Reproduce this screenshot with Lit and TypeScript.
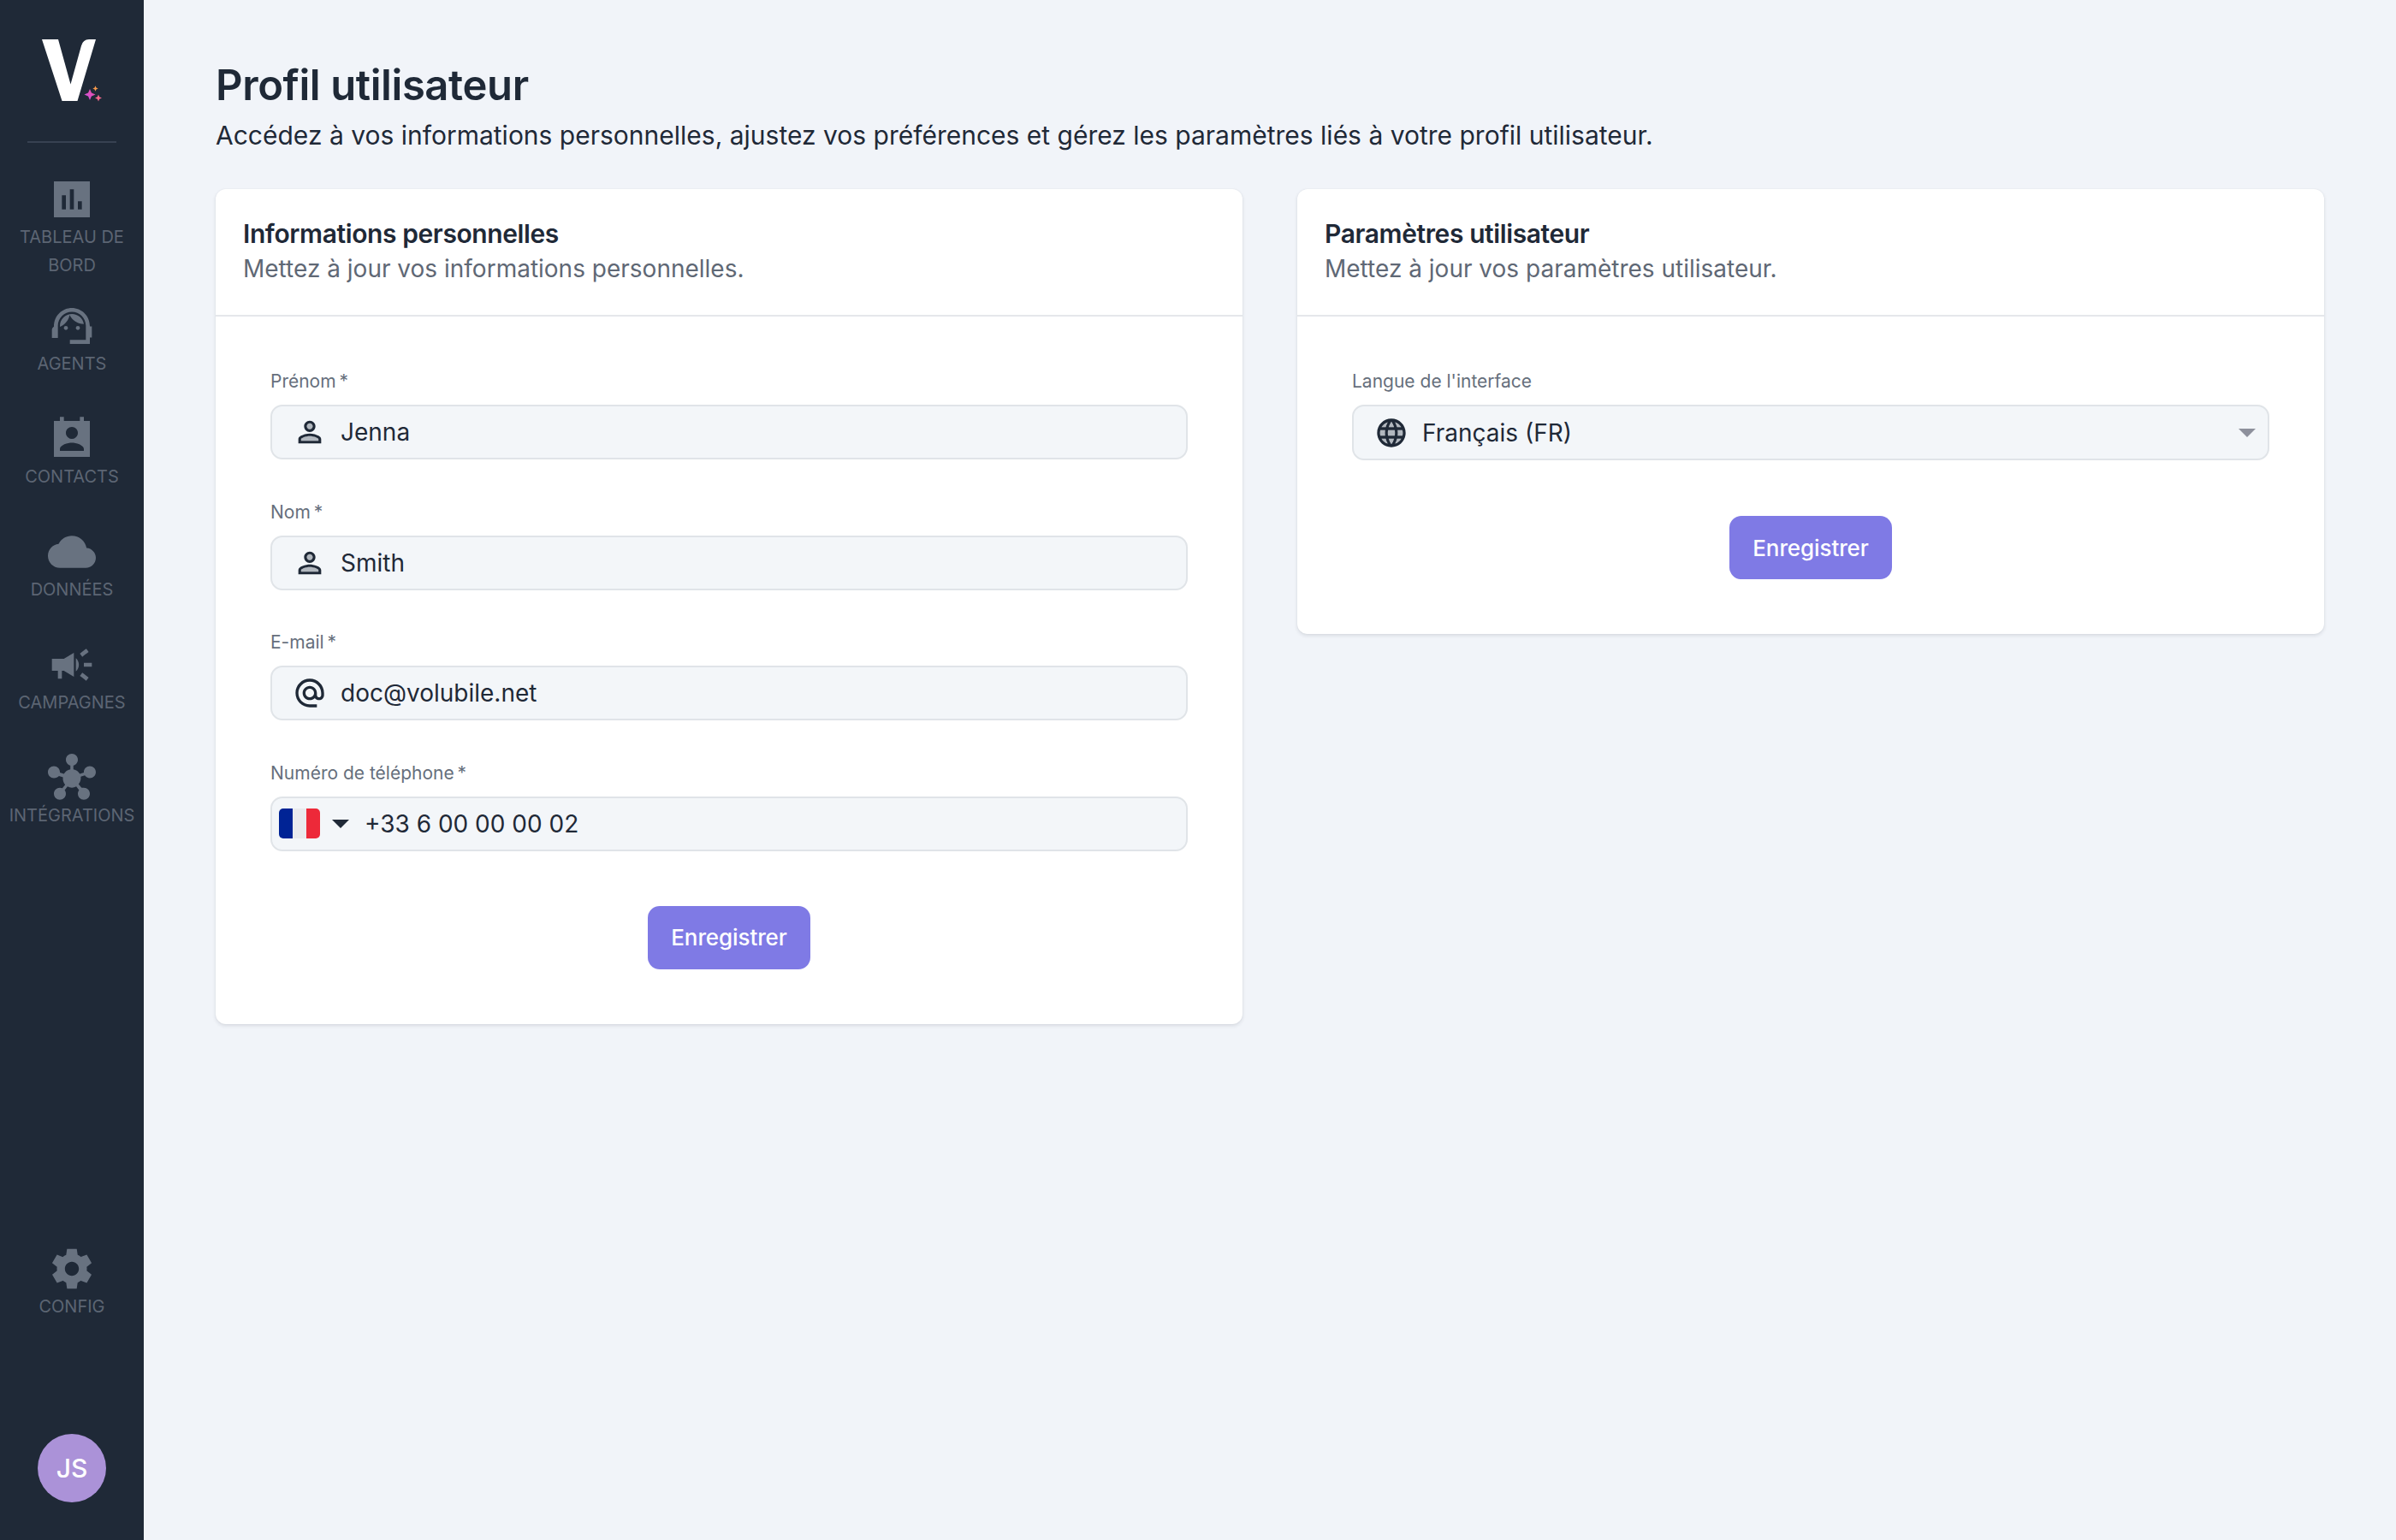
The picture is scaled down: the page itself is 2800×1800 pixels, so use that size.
import { LitElement, html, css, svg } from "lit";
import { customElement } from "lit/decorators.js";

const P = {
  bar: svg`<path d="M3 3v18h18V3H3zm6 14H7v-7h2v7zm4 0h-2V7h2v10zm4 0h-2v-4h2v4z"/>`,
  agent: svg`<path d="M21 12.22C21 6.73 16.74 3 12 3c-4.69 0-9 3.65-9 9.28-.6.34-1 .98-1 1.72V18h3v-6.1c0-3.87 3.13-7 7-7s7 3.13 7 7V19h-8v2h10v-3.22h1v-5.56h-1z"/><circle cx="9" cy="13" r="1"/><circle cx="15" cy="13" r="1"/><path d="M18 11.03C17.52 8.18 15.04 6 12.05 6c-3.03 0-6.29 2.51-6.03 6.45 2.47-1.01 4.33-3.21 4.86-5.89 1.31 2.63 4 4.44 7.12 4.47z"/>`,
  contact: svg`<path fill-rule="evenodd" d="M21 3h-3V1h-2v2H8V1H6v2H3v18h18V3zm-9 3c1.66 0 3 1.34 3 3s-1.34 3-3 3-3-1.34-3-3 1.34-3 3-3zm6 12H6v-1c0-2 4-3.1 6-3.1s6 1.1 6 3.1v1z"/>`,
  cloud: svg`<path d="M19.35 10.04C18.67 6.59 15.64 4 12 4 9.11 4 6.6 5.64 5.35 8.04 2.34 8.36 0 10.91 0 14c0 3.31 2.69 6 6 6h13c2.76 0 5-2.24 5-5 0-2.64-2.05-4.78-4.65-4.96z"/>`,
  campaign: svg`<path d="M18 11v2h4v-2h-4zm-2 6.61c.96.71 2.21 1.65 3.2 2.39.4-.53.8-1.07 1.2-1.6-.99-.74-2.24-1.68-3.2-2.4-.4.54-.8 1.08-1.2 1.61zM20.4 5.6c-.4-.53-.8-1.07-1.2-1.6-.99.74-2.24 1.68-3.2 2.4.4.53.8 1.07 1.2 1.6.96-.72 2.21-1.65 3.2-2.4zM2 9v6h3v4h2v-4h1l5 3V6L8 9H2zm13.5 3c0-1.33-.58-2.53-1.5-3.35v6.69c.92-.81 1.5-2.01 1.5-3.34z"/>`,
  hub: svg`<path d="M8.4 18.2c.38.5.6 1.12.6 1.8 0 1.66-1.34 3-3 3s-3-1.34-3-3 1.34-3 3-3c.44 0 .85.09 1.23.26l1.41-1.77c-.92-1.03-1.29-2.39-1.09-3.69l-2.03-.68C4.98 11.65 4.06 12.2 3 12.2c-1.66 0-3-1.34-3-3s1.34-3 3-3 3 1.34 3 3c0 .07 0 .14-.01.21l2.03.68c.64-1.21 1.82-2.09 3.22-2.32V5.91C9.96 5.57 9 4.4 9 3c0-1.66 1.34-3 3-3s3 1.34 3 3c0 1.4-.96 2.57-2.25 2.91v1.86c1.4.23 2.58 1.11 3.22 2.32l2.03-.68c-.01-.07-.01-.14-.01-.21 0-1.66 1.34-3 3-3s3 1.34 3 3-1.34 3-3 3c-1.06 0-1.98-.55-2.52-1.38l-2.03.68c.2 1.29-.16 2.65-1.09 3.69l1.41 1.77C17.15 17.09 17.56 17 18 17c1.66 0 3 1.34 3 3s-1.34 3-3 3-3-1.34-3-3c0-.68.22-1.3.6-1.8l-1.41-1.77c-1.35.75-3.01.76-4.37 0L8.4 18.2z"/>`,
  gear: svg`<path d="M19.44 12.99l-.01.02c.04-.33.08-.67.08-1.01 0-.34-.03-.66-.07-.99l.01.02 2.44-1.92-2.43-4.22-2.87 1.16.01.01c-.52-.4-1.09-.74-1.71-1h.01L14.44 2H9.57l-.44 3.07h.01c-.62.26-1.19.6-1.71 1l.01-.01-2.88-1.17-2.44 4.22 2.44 1.92.01-.02c-.04.33-.07.65-.07.99 0 .34.03.68.08 1.01l-.01-.02-2.1 1.65-.33.26 2.43 4.2 2.88-1.15-.02-.04c.53.41 1.1.75 1.73 1.01h-.03L9.58 22h4.85s.03-.18.06-.42l.38-2.65h-.01c.62-.26 1.2-.6 1.73-1.01l-.02.04 2.88 1.15 2.43-4.2s-.14-.12-.33-.26l-2.11-1.66zM12 15.5c-1.93 0-3.5-1.57-3.5-3.5s1.57-3.5 3.5-3.5 3.5 1.57 3.5 3.5-1.57 3.5-3.5 3.5z"/>`,
  person: svg`<circle cx="12" cy="8" opacity=".3" r="2.1"/><path opacity=".3" d="M12 14.9c-2.97 0-6.1 1.46-6.1 2.1v1.1h12.2V17c0-.64-3.13-2.1-6.1-2.1z"/><path d="M12 13c-2.67 0-8 1.34-8 4v3h16v-3c0-2.66-5.33-4-8-4zm6.1 5.1H5.9V17c0-.64 3.13-2.1 6.1-2.1s6.1 1.46 6.1 2.1v1.1zM12 12c2.21 0 4-1.79 4-4s-1.79-4-4-4-4 1.79-4 4 1.79 4 4 4zm0-6.1c1.16 0 2.1.94 2.1 2.1 0 1.16-.94 2.1-2.1 2.1S9.9 9.16 9.9 8c0-1.16.94-2.1 2.1-2.1z"/>`,
  at: svg`<path d="M12 2C6.48 2 2 6.48 2 12s4.48 10 10 10h5v-2h-5c-4.34 0-8-3.66-8-8s3.66-8 8-8 8 3.66 8 8v1.43c0 .79-.71 1.57-1.5 1.57s-1.5-.78-1.5-1.57V12c0-2.76-2.24-5-5-5s-5 2.24-5 5 2.24 5 5 5c1.38 0 2.64-.56 3.54-1.47.65.89 1.77 1.47 2.96 1.47 1.97 0 3.5-1.6 3.5-3.57V12c0-5.52-4.48-10-10-10zm0 13c-1.66 0-3-1.34-3-3s1.34-3 3-3 3 1.34 3 3-1.34 3-3 3z"/>`,
  globe: svg`<path opacity=".3" d="M5.08 8h2.95c.32-1.25.78-2.45 1.38-3.56-1.84.63-3.37 1.9-4.33 3.56zm2.42 4c0-.68.06-1.34.14-2H4.26c-.16.64-.26 1.31-.26 2s.1 1.36.26 2h3.38c-.08-.66-.14-1.32-.14-2zm-2.42 4c.96 1.66 2.49 2.93 4.33 3.56-.6-1.11-1.06-2.31-1.38-3.56H5.08zM12 4.04c-.83 1.2-1.48 2.53-1.91 3.96h3.82c-.43-1.43-1.08-2.76-1.91-3.96zM18.92 8c-.96-1.65-2.49-2.93-4.33-3.56.6 1.11 1.06 2.31 1.38 3.56h2.95zM12 19.96c.83-1.2 1.48-2.53 1.91-3.96h-3.82c.43 1.43 1.08 2.76 1.91 3.96zm2.59-.4c1.84-.63 3.37-1.91 4.33-3.56h-2.95c-.32 1.25-.78 2.45-1.38 3.56zM19.74 10h-3.38c.08.66.14 1.32.14 2s-.06 1.34-.14 2h3.38c.16-.64.26-1.31.26-2s-.1-1.36-.26-2zM9.66 10c-.09.65-.16 1.32-.16 2s.07 1.34.16 2h4.68c.09-.66.16-1.32.16-2s-.07-1.35-.16-2H9.66z"/><path d="M11.99 2C6.47 2 2 6.48 2 12s4.47 10 9.99 10C17.52 22 22 17.52 22 12S17.52 2 11.99 2zm6.93 6h-2.95c-.32-1.25-.78-2.45-1.38-3.56 1.84.63 3.37 1.91 4.33 3.56zM12 4.04c.83 1.2 1.48 2.53 1.91 3.96h-3.82c.43-1.43 1.08-2.76 1.91-3.96zM4.26 14C4.1 13.36 4 12.69 4 12s.1-1.36.26-2h3.38c-.08.66-.14 1.32-.14 2s.06 1.34.14 2H4.26zm.82 2h2.95c.32 1.25.78 2.45 1.38 3.56-1.84-.63-3.37-1.9-4.33-3.56zm2.95-8H5.08c.96-1.66 2.49-2.93 4.33-3.56C8.81 5.55 8.35 6.75 8.03 8zM12 19.96c-.83-1.2-1.48-2.53-1.91-3.96h3.82c-.43 1.43-1.08 2.76-1.91 3.96zM14.34 14H9.66c-.09-.66-.16-1.32-.16-2s.07-1.35.16-2h4.68c.09.65.16 1.32.16 2s-.07 1.34-.16 2zm.25 5.56c.6-1.11 1.06-2.31 1.38-3.56h2.95c-.96 1.65-2.49 2.93-4.33 3.56zM16.36 14c.08-.66.14-1.32.14-2s-.06-1.34-.14-2h3.38c.16.64.26 1.31.26 2s-.1 1.36-.26 2h-3.38z"/>`,
};

const star = (cx: number, cy: number, r: number) => {
  const k = r * 0.3;
  return `M${cx} ${cy - r}L${cx + k} ${cy - k}L${cx + r} ${cy}L${cx + k} ${cy + k}L${cx} ${cy + r}L${cx - k} ${cy + k}L${cx - r} ${cy}L${cx - k} ${cy - k}Z`;
};

const icon = (p: unknown, cls = "") => html`<svg class=${cls} viewBox="0 0 24 24" fill="currentColor">${p}</svg>`;

@customElement("app-root")
export class AppRoot extends LitElement {
  static styles = css`
    :host { display: block; font-family: Inter, "Liberation Sans", sans-serif; color: #1f2937; }
    .page { display: flex; height: 1800px; background: #f1f4f9; }
    .side { width: 168px; flex: none; background: #1f2937; display: flex; flex-direction: column; align-items: center; }
    .logo-wrap { height: 205px; flex: none; width: 100%; display: flex; flex-direction: column; align-items: center; }
    .logo { width: 84px; height: 84px; margin-top: 40px; flex: none; display: block; }
    .divider { width: 104px; height: 2px; background: #374151; margin-top: 41px; flex: none; }
    .nav { flex: 1; display: flex; flex-direction: column; width: 100%; }
    .item { height: 132px; display: flex; flex-direction: column; align-items: center; color: #687280; flex: none; }
    .item.tall { height: 148px; }
    .item svg { width: 56px; height: 56px; flex: none; display: block; }
    .item span { font-size: 20px; line-height: 33.2px; color: #5c6573; text-align: center; text-transform: uppercase; width: 168px; }
    .item.tall span { padding: 0 20px; box-sizing: border-box; }
    .foot { height: 345px; flex: none; width: 100%; display: flex; flex-direction: column; align-items: center; }
    .foot .item { height: 221px; width: 100%; }
    .avatar { width: 80px; height: 80px; border-radius: 50%; background: #ab92d8; color: #fff; display: flex; align-items: center; justify-content: center; font-size: 30px; font-weight: 500; flex: none; }
    .main { flex: 1; padding: 68px 84px 0; min-width: 0; }
    h1 { margin: 0; font-size: 49px; line-height: 64px; font-weight: 600; color: #1f2937; letter-spacing: -0.42px; }
    .lead { margin: 2px 0 0; font-size: 30px; line-height: 48px; color: #1f2937; }
    .cards { display: grid; grid-template-columns: 1200px 1200px; gap: 64px; align-items: start; margin-top: 39px; }
    .card { background: #fff; border-radius: 12px; box-shadow: 0 2px 4px rgba(31,41,55,.12), 0 0 2px rgba(31,41,55,.06); }
    .head { padding: 32px 32px 33px; border-bottom: 2px solid #e5e7eb; }
    .head h2 { margin: 0; font-size: 30px; line-height: 40px; font-weight: 600; color: #1f2937; letter-spacing: -0.4px; }
    .head p { margin: 0; font-size: 28px; line-height: 42px; color: #5f6875; }
    .body { padding: 60px 64px 64px; display: flex; flex-direction: column; }
    .field { display: flex; flex-direction: column; margin-bottom: 45.5px; }
    .form-last { margin-bottom: 0; }
    label { font-size: 21px; line-height: 32px; color: #666f7c; margin-bottom: 11px; height: 32px; }
    .input { height: 64px; box-sizing: border-box; border: 2px solid #e0e4e8; border-radius: 14px; background: #f3f6f9; display: flex; align-items: center; padding-left: 24px; font-size: 28px; color: #1f2937; }
    .input svg { width: 40px; height: 40px; flex: none; margin-right: 16px; }
    .select { height: 65px; justify-content: space-between; padding-right: 14px; }
    .select .l { display: flex; align-items: center; }
    .input svg.caret { width: 20px; height: 10px; margin: 0; color: #8d909c; }
    .phone { padding-left: 8px; }
    .flag { width: 48px; height: 35px; border-radius: 5px; overflow: hidden; display: flex; flex: none; }
    .flag i { flex: 1; display: block; }
    .input svg.pcaret { width: 20px; height: 10px; margin: 0 18px 0 14px; color: #1f2937; }
    .actions { display: flex; justify-content: center; margin-top: 64px; }
    .select-actions { margin-top: 65px; }
    button { height: 74px; width: 190px; border: 0; border-radius: 14px; background: #7f7ae5; color: #fff; font: 550 26px Inter, "Liberation Sans", sans-serif; letter-spacing: -0.1px; padding: 0; }
  `;

  private field(label: string, ic: unknown, value: string, req = true) {
    return html`<div class="field"><label>${label}${req ? "\u2009*" : ""}</label>
      <div class="input">${icon(ic)}${value}</div></div>`;
  }

  render() {
    return html`<div class="page">
      <aside class="side">
        <div class="logo-wrap">
          <svg class="logo" viewBox="0 0 84 84">
            <defs>
              <linearGradient id="g1" x1="0" y1="1" x2="1" y2="0"><stop offset="0" stop-color="#c84fe8"/><stop offset="1" stop-color="#f0529c"/></linearGradient>
            </defs>
            <path fill="#fff" d="M7 6H26L40.5 58.5L53 13.5Q55 6 62 6H70L48.5 78H30.5Z"/>
            <path fill="url(#g1)" d="${star(63, 70.5, 6.5)}"/>
            <path fill="#f69a4c" d="${star(69.5, 63.5, 3.2)}"/>
            <path fill="#f66a8e" d="${star(73, 74.5, 4)}"/>
          </svg>
          <div class="divider"></div>
        </div>
        <nav class="nav">
          <div class="item tall">${icon(P.bar)}<span>Tableau de bord</span></div>
          <div class="item">${icon(P.agent)}<span>Agents</span></div>
          <div class="item">${icon(P.contact)}<span>Contacts</span></div>
          <div class="item">${icon(P.cloud)}<span>Données</span></div>
          <div class="item">${icon(P.campaign)}<span>Campagnes</span></div>
          <div class="item">${icon(P.hub)}<span>Intégrations</span></div>
        </nav>
        <div class="foot">
          <div class="item">${icon(P.gear)}<span>Config</span></div>
          <div class="avatar">JS</div>
        </div>
      </aside>
      <main class="main">
        <h1>Profil utilisateur</h1>
        <p class="lead">Accédez à vos informations personnelles, ajustez vos préférences et gérez les paramètres liés à votre profil utilisateur.</p>
        <div class="cards">
          <section class="card">
            <div class="head"><h2>Informations personnelles</h2><p>Mettez à jour vos informations personnelles.</p></div>
            <div class="body">
              ${this.field("Prénom", P.person, "Jenna")}
              ${this.field("Nom", P.person, "Smith")}
              ${this.field("E-mail", P.at, "doc@volubile.net")}
              <div class="field form-last"><label>Numéro de téléphone\u2009*</label>
                <div class="input phone">
                  <div class="flag"><i style="background:#002395"></i><i style="background:#e9eaed"></i><i style="background:#ed2939"></i></div>
                  <svg class="pcaret" viewBox="0 0 20 10" fill="currentColor"><path d="M0 0H20L10 10Z"/></svg>
                  +33 6 00 00 00 02
                </div></div>
              <div class="actions"><button>Enregistrer</button></div>
            </div>
          </section>
          <section class="card">
            <div class="head"><h2>Paramètres utilisateur</h2><p>Mettez à jour vos paramètres utilisateur.</p></div>
            <div class="body">
              <div class="field form-last"><label>Langue de l'interface</label>
                <div class="input select"><div class="l">${icon(P.globe)}Français (FR)</div>
                  <svg class="caret" viewBox="0 0 20 10" fill="currentColor"><path d="M0 0H20L10 10Z"/></svg>
                </div></div>
              <div class="actions select-actions"><button>Enregistrer</button></div>
            </div>
          </section>
        </div>
      </main>
    </div>`;
  }
}
